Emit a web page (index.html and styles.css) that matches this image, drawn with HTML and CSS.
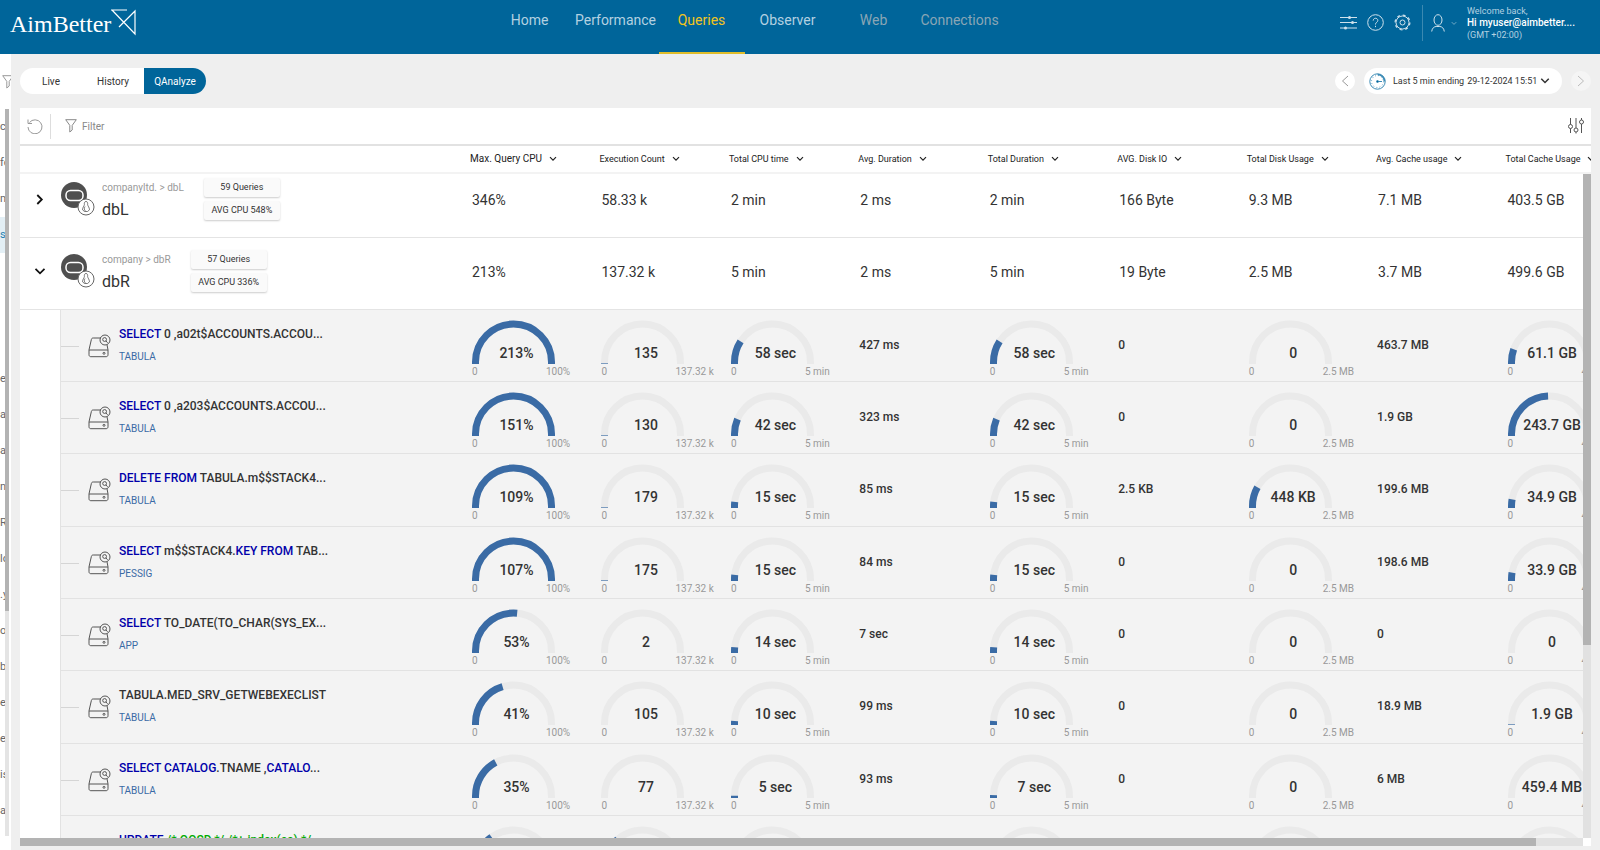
FILE: index.html
```html
<!DOCTYPE html>
<html lang="en">
<head>
    <meta charset="UTF-8">
    <meta name="viewport" content="width=device-width, initial-scale=1.0">
    <title>AimBetter - QAnalyze</title>
    <link rel="stylesheet" href="styles.css">
</head>
<body>
    <svg class="defs" width="0" height="0" aria-hidden="true">
        <symbol id="caret" viewBox="0 0 8 6"><path d="M1 1.2l3 3 3-3" fill="none" stroke="currentColor" stroke-width="1.2"/></symbol>
        <symbol id="funnel" viewBox="0 0 12 14"><path d="M.7.7h10.6L7.2 6.4V11L4.8 13V6.4z" fill="none" stroke="currentColor"/></symbol>
        <symbol id="server" viewBox="0 0 34 34">
            <circle cx="13" cy="13" r="13" fill="#4f4f4f"/>
            <rect x="5" y="8.500" width="17" height="10" rx="4.500" fill="none" stroke="#fff" stroke-width="1.500"/>
            <circle cx="25" cy="25" r="8" fill="#fff" stroke="#666"/>
            <path d="M25 19.5c-1.600 0-1.800 1.500-1.600 3-.2 1.600-1.900 3-1.900 5.300l2 1.700h3l2-1.700c0-2.300-1.700-3.700-1.900-5.300.2-1.500 0-3-1.600-3zM24 24.500c-.8 1.500-1 3 .3 4.500" fill="none" stroke="#555" stroke-width=".8"/>
        </symbol>
        <symbol id="disk" viewBox="0 0 24 24">
            <g fill="none" stroke="#555">
                <path d="M13 4H5.200C4 4 3.600 4.600 3.400 5.400L1 15.800v5c0 1.200.8 1.900 1.900 1.900h15.200c1.100 0 1.900-.7 1.900-1.900v-5l-1-5M1 16h19"/>
                <circle cx="17" cy="6" r="5"/>
                <circle cx="16.600" cy="5.500" r="1.900"/>
                <path d="M18 7l1.600 1.800"/>
                <circle cx="16" cy="19.300" r="1"/>
            </g>
        </symbol>
    </svg>

    <header class="header">
        <a class="logo" href="#" aria-label="AimBetter">
            <span>AimBetter</span>
            <svg width="26" height="27" viewBox="0 0 26 27"><path d="M0 1h16M1 1l23 24V2L8 18" fill="none" stroke="#fff" stroke-width="1.200"/></svg>
        </a>
        <nav class="nav">
            <a href="#">Home</a>
            <a href="#">Performance</a>
            <a href="#" class="active">Queries</a>
            <a href="#">Observer</a>
            <a href="#" class="disabled">Web</a>
            <a href="#" class="disabled">Connections</a>
        </nav>
        <div class="tools">
            <button aria-label="Settings list"><svg width="17" height="17" viewBox="0 0 17 17"><path d="M0 3.500h17M0 8.500h17M0 14h17" stroke="#cfe2ec" fill="none"/><g fill="#cfe2ec"><circle cx="9.500" cy="3.500" r="1.500"/><circle cx="12.500" cy="8.500" r="1.500"/><circle cx="5.500" cy="14" r="1.500"/></g></svg></button>
            <button aria-label="Help"><svg width="17" height="17" viewBox="0 0 17 17" fill="none" stroke="#cfe2ec"><circle cx="8.500" cy="8.500" r="7.800"/><path d="M6.200 6.600c0-3.200 4.800-3 4.600 0-.1 1.700-2.300 1.700-2.300 3.900M8.500 11.800v1.300"/></svg></button>
            <button aria-label="Configuration"><svg width="17" height="17" viewBox="0 0 17 17" fill="none" stroke="#cfe2ec"><circle cx="8.500" cy="8.500" r="6.500"/><circle cx="8.500" cy="8.500" r="2.500"/><circle cx="8.500" cy="8.500" r="7.400" stroke-width="1.200" stroke-dasharray="2.900 2.910"/></svg></button>
        </div>
        <button class="user">
            <svg width="14" height="18" viewBox="0 0 14 18" fill="none" stroke="#cfe2ec"><ellipse cx="7" cy="6" rx="4" ry="5.300"/><path d="M.7 17.500c.4-3.500 2.600-5 4.500-5h3.600c1.900 0 4.100 1.500 4.500 5"/></svg>
            <svg class="user-caret" width="6" height="5"><use href="#caret"/></svg>
            <span class="welcome">Welcome back,<strong>Hi myuser@aimbetter....</strong>(GMT +02:00)</span>
        </button>
    </header>

    <div class="page">
        <aside class="sidebar">
            <svg class="side-filter" width="12" height="14"><use href="#funnel"/></svg>
            <div class="side-scroll">
                <ul id="sideList"></ul>
                <div class="side-bar"><i></i></div>
            </div>
        </aside>

        <main class="main">
            <div class="topbar">
                <div class="tabs">
                    <button>Live</button>
                    <button>History</button>
                    <button class="active">QAnalyze</button>
                </div>
                <div class="period">
                    <button class="round" aria-label="Previous"><svg width="8" height="12" viewBox="0 0 8 12"><path d="M7 1L1.500 6 7 11" fill="none" stroke="#999"/></svg></button>
                    <button class="range">
                        <svg width="17" height="17" viewBox="0 0 17 17" fill="none" stroke="#3b8bb5"><circle cx="8.500" cy="8.500" r="7.700"/><circle cx="8.500" cy="8.500" r="6" stroke-dasharray=".8 2.340"/><path d="M8.500 1.500a7 7 0 0 1 7 7" stroke-width="1.600"/><path d="M8.500 8.500H13"/><circle cx="8.500" cy="8.500" r="1" fill="#00659a"/></svg>
                        <span>Last 5 min ending</span>
                        <span>29-12-2024 15:51</span>
                        <svg width="10" height="8"><use href="#caret"/></svg>
                    </button>
                    <button class="round off" aria-label="Next"><svg width="8" height="12" viewBox="0 0 8 12"><path d="M1 1l5.500 5L1 11" fill="none" stroke="#bbb"/></svg></button>
                </div>
            </div>

            <section class="panel">
                <div class="panel-bar">
                    <button class="refresh" aria-label="Refresh"><svg width="16" height="16" viewBox="0 0 16 16" fill="none" stroke="#999"><path d="M2.500 4.500A7 7 0 1 1 1 9M1 1.500v4h4"/></svg></button>
                    <button class="filter"><svg width="12" height="14"><use href="#funnel"/></svg>Filter</button>
                    <button class="columns" aria-label="Columns"><svg width="16" height="16" viewBox="0 0 16 16" fill="none" stroke="#555"><path d="M2.500 0v6.500M2.500 10.500V15M8 0v10M8 14v1.500M13.500 6v9M13.500 0v2"/><circle cx="2.500" cy="8.500" r="2"/><circle cx="8" cy="12" r="2"/><circle cx="13.500" cy="4" r="2"/></svg></button>
                </div>
                <div class="table-wrap">
                    <table>
                        <colgroup id="cols"><col class="col-name"></colgroup>
                        <thead><tr id="head"><td></td></tr></thead>
                        <tbody id="groups"></tbody>
                        <tbody id="queries"></tbody>
                    </table>
                    <div class="vbar"><i></i></div>
                </div>
                <div class="hbar"><div><i></i></div></div>
            </section>
        </main>
    </div>

    <script src="script.js"></script>
</body>
</html>
```
FILE: styles.css
```css
* {
    box-sizing: border-box;
}
body {
    margin: 0;
    height: 100vh;
    display: flex;
    flex-direction: column;
    overflow: hidden;
    background: #efefef;
    color: #333;
    font-family: Roboto, "Liberation Sans", sans-serif;
    font-size: 10px;
}
button {
    border: 0;
    padding: 0;
    background: none;
    color: inherit;
    font: inherit;
    cursor: pointer;
}
svg {
    display: block;
    flex: none;
}
a {
    text-decoration: none;
}
.defs {
    position: absolute;
}

/* header */
.header {
    display: flex;
    flex: none;
    height: 54px;
    background: #00659a;
    color: #fff;
}
.logo {
    display: flex;
    width: 149px;
    padding: 9px 0 0 10px;
    color: #fff;
    font: 24px/30px "Liberation Serif", serif;
}
.nav {
    flex: 1;
    display: flex;
    justify-content: center;
}
.nav a {
    width: 86px;
    height: 54px;
    color: #b3d1e1;
    font-size: 14px;
    line-height: 40px;
    text-align: center;
}
.nav .active {
    color: #f2c41d;
    border-bottom: 2px solid #e0bd2a;
}
.nav .disabled {
    color: #8aa5b5;
}
.tools {
    display: flex;
    gap: 10px;
    height: 45px;
    padding-right: 11px;
}
.user {
    display: flex;
    align-items: center;
    gap: 6px;
    width: 178px;
    height: 36px;
    margin-top: 5px;
    padding-left: 8px;
    border-left: 1px solid #3b89b1;
    text-align: left;
}
.user-caret {
    color: #7fb2cc;
}
.welcome {
    padding-left: 4px;
    color: #b3d1e1;
    font-size: 9px;
    line-height: 12px;
}
.welcome strong {
    display: block;
    color: #fff;
    font-size: 10px;
    font-weight: 500;
}

.page {
    flex: 1;
    display: flex;
    min-height: 0;
}

/* sidebar */
.sidebar {
    flex: none;
    width: 11px;
    padding: 21px 2px 14px 0;
    background: #fff;
    overflow: hidden;
}
.side-filter {
    margin-left: 2px;
    color: #999;
}
.side-scroll {
    display: flex;
    height: calc(100% - 14px);
    padding-top: 20px;
}
.sidebar ul {
    width: 5px;
    margin: 0;
    padding: 0;
    list-style: none;
    overflow: hidden;
}
.sidebar li {
    height: 36px;
    color: #666;
    font-size: 11px;
    line-height: 36px;
    white-space: nowrap;
}
.sidebar .selected {
    background: #e3eff5;
    color: #1f7fb0;
}
.side-bar {
    width: 4px;
    background: #e4e4e4;
}
.side-bar i {
    display: block;
    height: 69%;
    background: #b3b3b3;
}

/* main */
.main {
    flex: 1;
    min-width: 0;
    display: flex;
    flex-direction: column;
    padding: 14px 9px 4px;
}
.topbar {
    display: flex;
    justify-content: space-between;
    align-items: center;
    height: 26px;
    margin-bottom: 14px;
}
.tabs {
    display: flex;
    border-radius: 13px;
    background: #fff;
    overflow: hidden;
}
.tabs button {
    width: 62px;
    height: 26px;
}
.tabs .active {
    background: #00659a;
    color: #fff;
}
.period {
    display: flex;
    align-items: center;
    gap: 9px;
}
.round {
    display: flex;
    align-items: center;
    justify-content: center;
    width: 20px;
    height: 20px;
    border-radius: 50%;
    background: #fff;
}
.off {
    background: #f5f5f5;
}
.range {
    display: flex;
    align-items: center;
    gap: 3px;
    width: 198px;
    height: 26px;
    padding-left: 5px;
    border-radius: 13px;
    background: #fff;
    font-size: 9px;
}
.range span:first-of-type {
    margin-left: 4px;
}

.panel {
    flex: 1;
    min-height: 0;
    display: flex;
    flex-direction: column;
    background: #fff;
}
.panel-bar {
    display: flex;
    align-items: center;
    flex: none;
    height: 38px;
    padding: 0 7px 0 7px;
    border-bottom: 2px solid #e2e2e2;
    color: #888;
}
.refresh {
    display: flex;
    align-items: center;
    width: 24px;
    height: 25px;
    border-right: 1px solid #ddd;
}
.filter {
    display: flex;
    align-items: center;
    gap: 5px;
    margin-left: 14px;
}
.columns {
    margin-left: auto;
}

/* table */
.table-wrap {
    position: relative;
    flex: 1;
    min-height: 0;
    overflow: hidden;
}
table {
    width: calc(100% + 40px);
    table-layout: fixed;
    border-spacing: 0;
}
td, th {
    padding: 0;
    text-align: left;
    vertical-align: top;
}
.col-name {
    width: 446px;
}
thead td, thead th {
    height: 28px;
    border-bottom: 2px solid #f3f3f3;
    font-size: 9px;
    font-weight: 400;
    white-space: nowrap;
}
thead th:nth-child(2) {
    font-size: 10px;
}
.sort {
    display: flex;
    align-items: center;
    gap: 7px;
    height: 25px;
    padding-left: 4px;
    color: #222;
}
.group td {
    padding: 12px 0 15px 6px;
    border-bottom: 1px solid #e4e4e4;
    font-size: 14px;
    line-height: 44px;
}
.group:first-child td {
    padding-top: 4px;
}
.group td:first-child {
    padding-left: 0;
}
.server {
    display: flex;
    align-items: center;
    height: 42px;
    line-height: 20px;
}
.toggle {
    display: flex;
    justify-content: center;
    width: 40px;
    margin-right: 1px;
    color: #111;
}
.right svg {
    transform: rotate(-90deg);
}
.names {
    padding: 0 20px 0 7px;
    color: #999;
    font-size: 10px;
}
.names b {
    display: block;
    color: #333;
    font-size: 16px;
    font-weight: 400;
    line-height: 23px;
}
.badges span {
    display: block;
    width: 76px;
    height: 19px;
    border-radius: 2px;
    background: #fafafa;
    box-shadow: 0 1px 2px #ccc;
    font-size: 9px;
    line-height: 19px;
    text-align: center;
}
.badges span + span {
    margin-top: 4px;
}

.query td {
    height: 72px;
    padding-left: 5px;
    border-bottom: 1px solid #e2e2e2;
    background: #f3f3f3;
}
/* rows are a third of a pixel over 72 */
.query:nth-child(3n) td {
    height: 73px;
}
.query td:first-child {
    padding: 0 0 0 40px;
    border-bottom: 0;
    background: #fff;
}
.query-name {
    display: flex;
    height: 100%;
    border-left: 1px solid #e2e2e2;
    border-bottom: 1px solid #e2e2e2;
    background: #f3f3f3;
}
.query-name::before {
    content: "";
    width: 18px;
    height: 1px;
    margin: 36px 9px 0 0;
    background: #d5d5d5;
}
.query-name svg {
    margin: 24px 7px 0 0;
}
.sql {
    padding-top: 13px;
    color: #333;
    font-size: 12px;
    font-weight: 500;
    line-height: 23px;
    white-space: nowrap;
}
.sql b {
    color: #00a;
    font-weight: 500;
}
.sql em {
    color: #0a0;
    font-style: normal;
}
.sql a {
    display: block;
    color: #3a6aa5;
    font-size: 10px;
    font-weight: 400;
    line-height: 22px;
}
.plain {
    font-size: 12px;
    font-weight: 500;
    line-height: 71px;
}
.gauge {
    display: grid;
    grid-template-columns: 75px 1fr;
    padding-top: 10px;
    color: #999;
    line-height: 14px;
    white-space: nowrap;
}
.dial {
    grid-column: 1 / -1;
    display: grid;
    width: 91px;
    height: 45px;
}
.dial > * {
    grid-area: 1 / 1;
}
.dial path {
    fill: none;
    stroke: #eaeaea;
    stroke-width: 7;
}
.dial .value {
    stroke: #3a6ba5;
}
.dial strong {
    padding-top: 24px;
    color: #333;
    font-size: 14px;
    font-weight: 500;
    line-height: 18px;
    text-align: center;
}
.gauge > span:first-of-type {
    padding-left: 1px;
}

/* scrollbars */
.vbar {
    position: absolute;
    top: 28px;
    right: 0;
    bottom: 0;
    width: 8px;
    background: #e1e1e1;
}
.vbar i {
    display: block;
    height: 71%;
    background: #b3b3b3;
}
.hbar {
    flex: none;
    padding-right: 8px;
}
.hbar div {
    background: #e1e1e1;
}
.hbar i {
    display: block;
    width: 97%;
    height: 8px;
    background: #b3b3b3;
}
```
FILE: script.js
```js
const columns = ['Max. Query CPU', 'Execution Count', 'Total CPU time', 'Avg. Duration', 'Total Duration',
    'AVG. Disk IO', 'Total Disk Usage', 'Avg. Cache usage', 'Total Cache Usage'];

// upper end of each gauge, null for columns that show plain text
const maxLabels = ['100%', '137.32 k', '5 min', null, '5 min', null, '2.5 MB', null, '499.6 GB'];

const groups = [
    { path: 'companyltd. > dbL', name: 'dbL', queries: 59, cpu: 548, open: false,
      values: ['346%', '58.33 k', '2 min', '2 ms', '2 min', '166 Byte', '9.3 MB', '7.1 MB', '403.5 GB'] },
    { path: 'company > dbR', name: 'dbR', queries: 57, cpu: 336, open: true,
      values: ['213%', '137.32 k', '5 min', '2 ms', '5 min', '19 Byte', '2.5 MB', '3.7 MB', '499.6 GB'] }
];

// gauge cells are [text, percent]
const queries = [
    { sql: '<b>SELECT</b> 0 ,a02t$ACCOUNTS.ACCOU...', db: 'TABULA',
      values: [['213%', 100], ['135', 0.5], ['58 sec', 19.3], '427 ms', ['58 sec', 19.3], '0', ['0', 0], '463.7 MB', ['61.1 GB', 12.2]] },
    { sql: '<b>SELECT</b> 0 ,a203$ACCOUNTS.ACCOU...', db: 'TABULA',
      values: [['151%', 100], ['130', 0.5], ['42 sec', 14], '323 ms', ['42 sec', 14], '0', ['0', 0], '1.9 GB', ['243.7 GB', 48.8]] },
    { sql: '<b>DELETE FROM</b> TABULA.m$$STACK4...', db: 'TABULA',
      values: [['109%', 100], ['179', 0.5], ['15 sec', 5], '85 ms', ['15 sec', 5], '2.5 KB', ['448 KB', 17.5], '199.6 MB', ['34.9 GB', 7]] },
    { sql: '<b>SELECT</b> m$$STACK4.<b>KEY FROM</b> TAB...', db: 'PESSIG',
      values: [['107%', 100], ['175', 0.5], ['15 sec', 5], '84 ms', ['15 sec', 5], '0', ['0', 0], '198.6 MB', ['33.9 GB', 6.8]] },
    { sql: '<b>SELECT</b> TO_DATE(TO_CHAR(SYS_EX...', db: 'APP',
      values: [['53%', 53], ['2', 0], ['14 sec', 4.7], '7 sec', ['14 sec', 4.7], '0', ['0', 0], '0', ['0', 0]] },
    { sql: 'TABULA.MED_SRV_GETWEBEXECLIST', db: 'TABULA',
      values: [['41%', 41], ['105', 0], ['10 sec', 3.3], '99 ms', ['10 sec', 3.3], '0', ['0', 0], '18.9 MB', ['1.9 GB', 0.5]] },
    { sql: '<b>SELECT CATALOG</b>.TNAME ,<b>CATALO</b>...', db: 'TABULA',
      values: [['35%', 35], ['77', 0], ['5 sec', 1.8], '93 ms', ['7 sec', 2.3], '0', ['0', 0], '6 MB', ['459.4 MB', 0]] },
    { sql: '<b>UPDATE</b> <em>/*.OOSD.*/./*+.index(ea).*/</em>', db: 'TABULA',
      values: [['31%', 31], ['37 k', 28], ['5 sec', 1.8], '1 ms', ['5 sec', 1.8], '0', ['0', 0], '6 MB', ['0', 0]] }
];

const sideItems = ['cc', 'fo', 'm', 's', '', '', '', 'e', 'a', 'as', 'n', 'R', 'lo', '.y', 'ol', 'b', 'e', 'e', 'is', 'a'];

function caret(width, height) {
    return `<svg width="${width}" height="${height}"><use href="#caret"/></svg>`;
}

function gauge([text, percent], max) {
    const arc = 'M4.5 44V42a38 38 0 0 1 76 0V44';
    const value = percent ? `<path class="value" pathLength="100" stroke-dasharray="${percent} 200" d="${arc}"/>` : '';
    return `<div class="gauge">
        <div class="dial"><svg width="86" height="45"><path d="${arc}"/>${value}</svg><strong>${text}</strong></div>
        <span>0</span><span>${max}</span>
    </div>`;
}

document.getElementById('cols').innerHTML += '<col>'.repeat(columns.length);

document.getElementById('head').innerHTML += columns
    .map(name => `<th scope="col"><button class="sort">${name} ${caret(8, 6)}</button></th>`).join('');

document.getElementById('groups').innerHTML = groups.map(g => `<tr class="group">
    <td><div class="server">
        <button class="toggle ${g.open ? '' : 'right'}" aria-label="Toggle ${g.name}">${caret(12, 9)}</button>
        <svg width="34" height="34"><use href="#server"/></svg>
        <div class="names">${g.path.replace('>', '&gt;')}<b>${g.name}</b></div>
        <div class="badges"><span>${g.queries} Queries</span><span>AVG CPU ${g.cpu}%</span></div>
    </div></td>
    ${g.values.map(v => `<td>${v}</td>`).join('')}
</tr>`).join('');

document.getElementById('queries').innerHTML = queries.map(q => `<tr class="query">
    <td><div class="query-name">
        <svg width="24" height="24"><use href="#disk"/></svg>
        <div class="sql">${q.sql}<a href="#">${q.db}</a></div>
    </div></td>
    ${q.values.map((v, i) => `<td>${maxLabels[i] ? gauge(v, maxLabels[i]) : `<div class="plain">${v}</div>`}</td>`).join('')}
</tr>`).join('');

document.getElementById('sideList').innerHTML = sideItems
    .map((text, i) => `<li${i === 3 ? ' class="selected"' : ''}>${text}</li>`).join('');
```
